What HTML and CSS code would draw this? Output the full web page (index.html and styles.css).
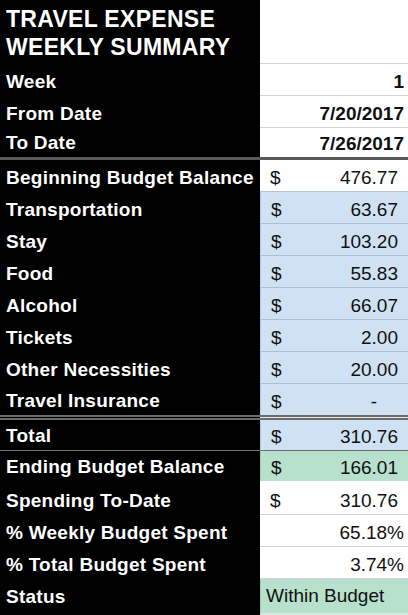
FILE: index.html
```html
<!DOCTYPE html>
<html>
<head>
<meta charset="utf-8">
<link rel="stylesheet" href="styles.css">
</head>
<body>
<div class="sheet">
  <div class="row header">
    <div class="label title">TRAVEL EXPENSE<br>WEEKLY SUMMARY</div>
    <div class="val plain bordered"></div>
  </div>
  <div class="row">
    <div class="label">Week</div>
    <div class="val plain bordered bold right">1</div>
  </div>
  <div class="row">
    <div class="label">From Date</div>
    <div class="val plain bordered bold right">7/20/2017</div>
  </div>
  <div class="row h29">
    <div class="label">To Date</div>
    <div class="val plain bold right">7/26/2017</div>
  </div>
  <div class="sep-thick"></div>
  <div class="row">
    <div class="label">Beginning Budget Balance</div>
    <div class="val plain blueline acct"><span>$</span><span>476.77</span></div>
  </div>
  <div class="row">
    <div class="label">Transportation</div>
    <div class="val blue acct"><span>$</span><span>63.67</span></div>
  </div>
  <div class="row">
    <div class="label">Stay</div>
    <div class="val blue acct"><span>$</span><span>103.20</span></div>
  </div>
  <div class="row">
    <div class="label">Food</div>
    <div class="val blue acct"><span>$</span><span>55.83</span></div>
  </div>
  <div class="row">
    <div class="label">Alcohol</div>
    <div class="val blue acct"><span>$</span><span>66.07</span></div>
  </div>
  <div class="row">
    <div class="label">Tickets</div>
    <div class="val blue acct"><span>$</span><span>2.00</span></div>
  </div>
  <div class="row">
    <div class="label">Other Necessities</div>
    <div class="val blue acct"><span>$</span><span>20.00</span></div>
  </div>
  <div class="row h31">
    <div class="label">Travel Insurance</div>
    <div class="val blue noline acct dash"><span>$</span><span>-</span></div>
  </div>
  <div class="sep-double"></div>
  <div class="row h30">
    <div class="label">Total</div>
    <div class="val blue noline acct"><span>$</span><span>310.76</span></div>
  </div>
  <div class="sep-thin"></div>
  <div class="row h30">
    <div class="label">Ending Budget Balance</div>
    <div class="val green acct"><span>$</span><span>166.01</span></div>
  </div>
  <div class="row h34">
    <div class="label">Spending To-Date</div>
    <div class="val plain bordered acct"><span>$</span><span>310.76</span></div>
  </div>
  <div class="row">
    <div class="label">% Weekly Budget Spent</div>
    <div class="val plain bordered right">65.18%</div>
  </div>
  <div class="row">
    <div class="label">% Total Budget Spent</div>
    <div class="val plain bordered right">3.74%</div>
  </div>
  <div class="row h36">
    <div class="label status-label">Status</div>
    <div class="val green status">Within Budget</div>
  </div>
</div>
</body>
</html>
```

FILE: styles.css
```css
html, body {
  margin: 0;
  padding: 0;
  background: #ffffff;
}

.sheet {
  width: 408px;
  height: 615px;
  overflow: hidden;
  font-family: "Liberation Sans", Arial, sans-serif;
  font-size: 19px;
  background: #000;
}

.row {
  display: grid;
  grid-template-columns: 260px 1fr;
  height: 32px;
}

.row.header { height: 64px; }
.row.h29 { height: 29px; }
.row.h30 { height: 30px; }
.row.h31 { height: 31px; }
.row.h34 { height: 34px; }
.row.h36 { height: 36px; }

.label {
  background: #000;
  color: #fff;
  font-weight: bold;
  letter-spacing: 0.25px;
  padding: 0 0 3px 6px;
  display: flex;
  align-items: flex-end;
  line-height: 22px;
  white-space: nowrap;
}

.title {
  font-size: 23px;
  line-height: 28px;
  letter-spacing: 0.3px;
  align-items: flex-start;
  padding: 5px 0 0 6px;
}

.status-label { padding-bottom: 7px; }

.val {
  box-sizing: border-box;
  color: #111;
  display: flex;
  align-items: flex-end;
  line-height: 22px;
  padding: 0 4px 2px 10px;
  white-space: nowrap;
}

.plain { background: #fff; }
.bordered { border-bottom: 1px solid #d3d3d3; }
.blueline { border-bottom: 1px solid #b3c5d6; }

.blue {
  background: #cfe2f3;
  border-bottom: 1px solid #aebfd0;
  border-left: 1px solid #b7c8d8;
}
.blue.noline { border-bottom: none; }

.green {
  background: #b7e1cd;
  border-left: 1px solid #a3c9b6;
}

.bold { font-weight: bold; }
.right { justify-content: flex-end; }

.acct {
  justify-content: space-between;
  padding-right: 10px;
}
.acct.dash { padding-right: 31px; }

.status {
  padding-left: 5px;
  padding-bottom: 6px;
  border-bottom: 2px solid #d8e8e0;
}

.sep-thick {
  height: 3px;
  background: #595959;
}

.sep-double {
  height: 1px;
  border-top: 2px solid #6b6b6b;
  border-bottom: 2px solid #6b6b6b;
  background: linear-gradient(to right, #000 260px, #e6e6e6 260px);
}

.sep-thin {
  height: 1px;
  background: #707070;
}
```
